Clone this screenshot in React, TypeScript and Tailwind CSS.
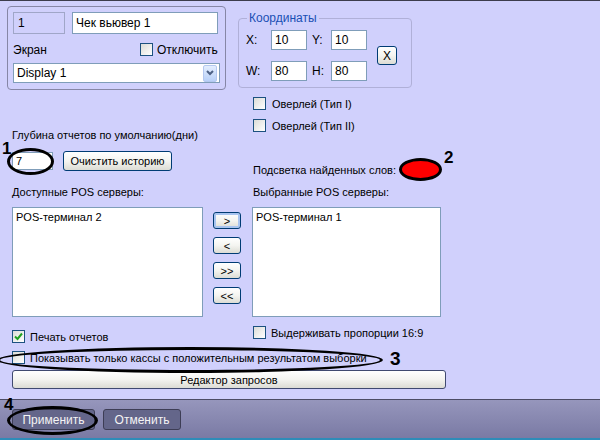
import React from 'react';

const Check = ({ checked = false }: { checked?: boolean }) => (
  <span className="w-[13px] h-[13px] shrink-0 border border-[#1c5180] bg-linear-to-br from-[#dcdcd7] to-white flex items-center justify-center">
    {checked && (
      <svg width="9" height="9" viewBox="0 0 9 9">
        <path d="M1 4.5 L3.5 7 L8 1.5" fill="none" stroke="#21a121" strokeWidth="2" />
      </svg>
    )}
  </span>
);

const XpButton = ({ className = '', children }: { className?: string; children: React.ReactNode }) => (
  <div
    className={`border border-[#003c74] rounded-[3px] bg-linear-to-b from-white via-[#f4f4f0] to-[#dcdcd4] flex items-center justify-center ${className}`}
  >
    {children}
  </div>
);

const Field = ({ className = '', children }: { className?: string; children?: React.ReactNode }) => (
  <div className={`border border-[#7f9db9] bg-white flex items-center px-[3px] ${className}`}>{children}</div>
);

export default function App() {
  return (
    <div className="relative w-[600px] h-[440px] bg-[#d0d0fc] overflow-hidden font-['Liberation_Sans',Arial,sans-serif] text-[11px] leading-[14px] text-black border-t border-[#3c3c4c]">
      <div className="h-[398px] flex flex-col">
        {/* верх: две колонки */}
        <div className="flex">
          {/* левая колонка */}
          <div className="w-[238px] pl-[7px] flex flex-col">
            <div className="mt-[5px] w-[219px] h-[84px] border border-[#8686a6] rounded-[4px] pl-[5px] pt-[5px] flex flex-col">
              <div className="flex gap-[7px]">
                <div className="w-[52px] h-[22px] border border-[#a0a6c8] flex items-center px-[4px] text-[12px]">1</div>
                <Field className="w-[146px] h-[22px] text-[12px]">Чек вьювер 1</Field>
              </div>
              <div className="flex items-center mt-[9px] h-[13px]">
                <span className="w-[127px] text-[12px]">Экран</span>
                <Check />
                <span className="ml-[4px] text-[12px]">Отключить</span>
              </div>
              <Field className="mt-[7px] w-[207px] h-[20px] justify-between pr-[2px] text-[12px]">
                <span>Display 1</span>
                <span className="w-[14px] h-[17px] rounded-[2px] border border-[#b4c8f0] bg-linear-to-b from-[#e4eefe] to-[#b8d0f8] flex items-center justify-center">
                  <svg width="8" height="6" viewBox="0 0 8 6">
                    <path d="M1 1 L4 4 L7 1" fill="none" stroke="#4d6185" strokeWidth="2" />
                  </svg>
                </span>
              </Field>
            </div>
            <div className="ml-[5px] mt-[38px]">Глубина отчетов по умолчанию(дни)</div>
            <div className="ml-[5px] mt-[9px] flex items-center gap-[10px] h-[20px]">
              <Field className="w-[41px] h-[18px]">7</Field>
              <XpButton className="w-[109px] h-[20px]">Очистить историю</XpButton>
            </div>
            <div className="ml-[5px] mt-[14px]">Доступные POS серверы:</div>
          </div>

          {/* правая колонка */}
          <div className="flex flex-col">
            <fieldset className="mt-[10px] w-[174px] h-[77px] border border-[#b0b0d8] rounded-[4px] pl-[7px]">
              <legend className="ml-[1px] px-[2px] text-[12px] text-[#1a4fb4]">Координаты</legend>
              <div className="flex items-center mt-[5px]">
                <div className="grid grid-cols-[20px_36px_14px_36px] gap-x-[5px] gap-y-[11px] items-center text-[12px]">
                  <span>X:</span>
                  <Field className="h-[20px]">10</Field>
                  <span>Y:</span>
                  <Field className="h-[20px]">10</Field>
                  <span>W:</span>
                  <Field className="h-[20px]">80</Field>
                  <span>H:</span>
                  <Field className="h-[20px]">80</Field>
                </div>
                <XpButton className="ml-[10px] w-[20px] h-[19px] text-[12px]">X</XpButton>
              </div>
            </fieldset>
            <div className="ml-[15px] mt-[9px] flex items-center gap-[6px] h-[13px]">
              <Check />
              <span>Оверлей (Тип I)</span>
            </div>
            <div className="ml-[15px] mt-[9px] flex items-center gap-[6px] h-[13px]">
              <Check />
              <span>Оверлей (Тип II)</span>
            </div>
            <div className="ml-[15px] mt-[26px] flex items-center h-[23px]">
              <span className="w-[146px]">Подсветка найденных слов:</span>
              <span className="w-[43px] h-[23px] rounded-[50%] bg-[#ff0000] border-[3px] border-black" />
            </div>
            <div className="ml-[15px] mt-[4px]">Выбранные POS серверы:</div>
          </div>
        </div>

        {/* списки */}
        <div className="mt-[8px] ml-[12px] flex">
          <Field className="w-[191px] h-[110px] items-start pt-[2px]">POS-терминал 2</Field>
          <div className="ml-[10px] w-[28px] flex flex-col gap-[8px] pt-[5px]">
            <XpButton className="h-[17px] shadow-[inset_0_0_0_2px_#a8c4f0]">&gt;</XpButton>
            <XpButton className="h-[17px]">&lt;</XpButton>
            <XpButton className="h-[17px]">&gt;&gt;</XpButton>
            <XpButton className="h-[17px]">&lt;&lt;</XpButton>
          </div>
          <Field className="ml-[11px] w-[189px] h-[110px] items-start pt-[2px]">POS-терминал 1</Field>
        </div>

        <div className="ml-[12px] flex items-start">
          <div className="w-[241px] mt-[13px] flex items-center gap-[5px] h-[13px]">
            <Check checked />
            <span>Печать отчетов</span>
          </div>
          <div className="mt-[9px] flex items-center gap-[5px] h-[13px]">
            <Check />
            <span>Выдерживать пропорции 16:9</span>
          </div>
        </div>
        <div className="ml-[12px] mt-[8px] flex items-center gap-[5px] h-[13px]">
          <Check />
          <span>Показывать только кассы с положительным результатом выборки</span>
        </div>
        <XpButton className="ml-[12px] mt-[6px] w-[434px] h-[19px] border-[#404a70]">Редактор запросов</XpButton>
      </div>

      {/* нижняя панель */}
      <div className="h-[39px] border-t border-[#4c4c64] bg-linear-to-b from-[#9696bc] to-[#7a7aa4] flex items-center gap-[8px] pl-[12px] pt-[1px]">
        <div className="w-[83px] h-[21px] rounded-[3px] border border-[#3d3d55] bg-[#64668a] text-[#f4f4f4] text-[12px] flex items-center justify-center">
          Применить
        </div>
        <div className="w-[78px] h-[21px] rounded-[3px] border border-[#3d3d55] bg-[#64668a] text-[#f4f4f4] text-[12px] flex items-center justify-center">
          Отменить
        </div>
      </div>
      <div className="h-[3px] bg-[#2e8cb8]" />

      {/* пометки */}
      <span className="absolute left-[7px] top-[147px] w-[47px] h-[27px] rounded-[50%] border-[3px] border-black" />
      <span className="absolute left-[-3px] top-[346px] w-[386px] h-[26px] rounded-[50%] border-[3px] border-black" />
      <span className="absolute left-[7px] top-[405px] w-[91px] h-[29px] rounded-[50%] border-[3px] border-black" />
      <span className="absolute left-[2px] top-[139px] font-bold text-[17px] leading-[17px]">1</span>
      <span className="absolute left-[444px] top-[148px] font-bold text-[17px] leading-[17px]">2</span>
      <span className="absolute left-[390px] top-[348px] font-bold text-[19px] leading-[19px]">3</span>
      <span className="absolute left-[4px] top-[395px] font-bold text-[17px] leading-[17px]">4</span>
    </div>
  );
}
